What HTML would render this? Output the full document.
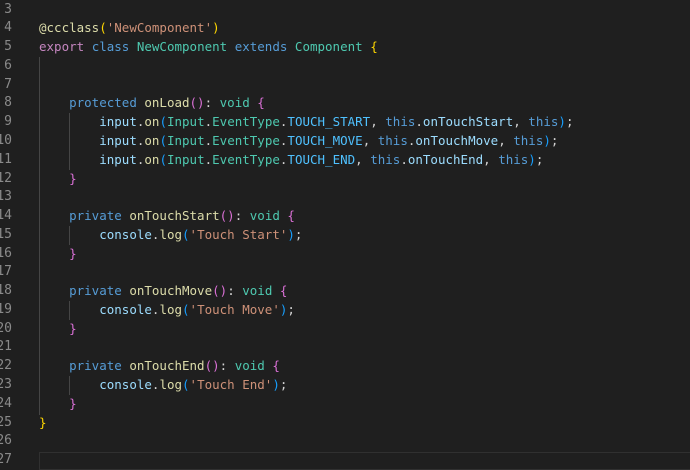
<!DOCTYPE html>
<html><head><style>
body{margin:0;background:#1f1f1f;width:690px;height:460px;overflow:hidden;position:relative;font-family:"DejaVu Sans Mono",monospace;font-size:12.5px;}
.l{position:absolute;left:0;height:18.77px;line-height:18.77px;white-space:pre;width:690px}
.n{position:absolute;right:678px;color:#8a8a8a;text-align:right;font-size:13px}
.c{position:absolute;left:39px;color:#d4d4d4}
.g{position:absolute;width:1px;background:#454545}
.k{color:#569cd6}.p{color:#c586c0}.t{color:#4ec9b0}.f{color:#dcdcaa}.v{color:#9cdcfe}.s{color:#ce9178}.o{color:#4fc1ff}
.y{color:#ffd700}.m{color:#da70d6}.b{color:#179fff}
</style></head><body>
<div class="g" style="left:39px;top:57px;height:358px"></div>
<div class="g" style="left:69px;top:113px;height:57px"></div>
<div class="g" style="left:69px;top:226px;height:19px"></div>
<div class="g" style="left:69px;top:301px;height:19px"></div>
<div class="g" style="left:69px;top:376px;height:19px"></div>
<div style="position:absolute;left:39px;top:452px;width:660px;height:18px;border:1px solid #303030;box-sizing:border-box"></div>
<div class="l" style="top:0.6px"><span class="n">3</span></div>
<div class="l" style="top:19.4px"><span class="n">4</span><span class="c"><span class="f">@ccclass</span><span class="y">(</span><span class="s">'NewComponent'</span><span class="y">)</span></span></div>
<div class="l" style="top:38.1px"><span class="n">5</span><span class="c"><span class="p">export</span> <span class="k">class</span> <span class="t">NewComponent</span> <span class="k">extends</span> <span class="t">Component</span> <span class="y">{</span></span></div>
<div class="l" style="top:56.9px"><span class="n">6</span></div>
<div class="l" style="top:75.7px"><span class="n">7</span></div>
<div class="l" style="top:94.4px"><span class="n">8</span><span class="c">    <span class="k">protected</span> <span class="f">onLoad</span><span class="m">()</span>: <span class="t">void</span> <span class="m">{</span></span></div>
<div class="l" style="top:113.2px"><span class="n">9</span><span class="c">        <span class="v">input</span>.<span class="f">on</span><span class="b">(</span><span class="t">Input</span>.<span class="t">EventType</span>.<span class="o">TOUCH_START</span>, <span class="k">this</span>.<span class="v">onTouchStart</span>, <span class="k">this</span><span class="b">)</span>;</span></div>
<div class="l" style="top:132px"><span class="n">10</span><span class="c">        <span class="v">input</span>.<span class="f">on</span><span class="b">(</span><span class="t">Input</span>.<span class="t">EventType</span>.<span class="o">TOUCH_MOVE</span>, <span class="k">this</span>.<span class="v">onTouchMove</span>, <span class="k">this</span><span class="b">)</span>;</span></div>
<div class="l" style="top:150.7px"><span class="n">11</span><span class="c">        <span class="v">input</span>.<span class="f">on</span><span class="b">(</span><span class="t">Input</span>.<span class="t">EventType</span>.<span class="o">TOUCH_END</span>, <span class="k">this</span>.<span class="v">onTouchEnd</span>, <span class="k">this</span><span class="b">)</span>;</span></div>
<div class="l" style="top:169.5px"><span class="n">12</span><span class="c">    <span class="m">}</span></span></div>
<div class="l" style="top:188.3px"><span class="n">13</span></div>
<div class="l" style="top:207px"><span class="n">14</span><span class="c">    <span class="k">private</span> <span class="f">onTouchStart</span><span class="m">()</span>: <span class="t">void</span> <span class="m">{</span></span></div>
<div class="l" style="top:225.8px"><span class="n">15</span><span class="c">        <span class="v">console</span>.<span class="f">log</span><span class="b">(</span><span class="s">'Touch Start'</span><span class="b">)</span>;</span></div>
<div class="l" style="top:244.6px"><span class="n">16</span><span class="c">    <span class="m">}</span></span></div>
<div class="l" style="top:263.3px"><span class="n">17</span></div>
<div class="l" style="top:282.1px"><span class="n">18</span><span class="c">    <span class="k">private</span> <span class="f">onTouchMove</span><span class="m">()</span>: <span class="t">void</span> <span class="m">{</span></span></div>
<div class="l" style="top:300.9px"><span class="n">19</span><span class="c">        <span class="v">console</span>.<span class="f">log</span><span class="b">(</span><span class="s">'Touch Move'</span><span class="b">)</span>;</span></div>
<div class="l" style="top:319.6px"><span class="n">20</span><span class="c">    <span class="m">}</span></span></div>
<div class="l" style="top:338.4px"><span class="n">21</span></div>
<div class="l" style="top:357.2px"><span class="n">22</span><span class="c">    <span class="k">private</span> <span class="f">onTouchEnd</span><span class="m">()</span>: <span class="t">void</span> <span class="m">{</span></span></div>
<div class="l" style="top:375.9px"><span class="n">23</span><span class="c">        <span class="v">console</span>.<span class="f">log</span><span class="b">(</span><span class="s">'Touch End'</span><span class="b">)</span>;</span></div>
<div class="l" style="top:394.7px"><span class="n">24</span><span class="c">    <span class="m">}</span></span></div>
<div class="l" style="top:413.5px"><span class="n">25</span><span class="c"><span class="y">}</span></span></div>
<div class="l" style="top:432.2px"><span class="n">26</span></div>
<div class="l" style="top:451px"><span class="n">27</span></div>
</body></html>
